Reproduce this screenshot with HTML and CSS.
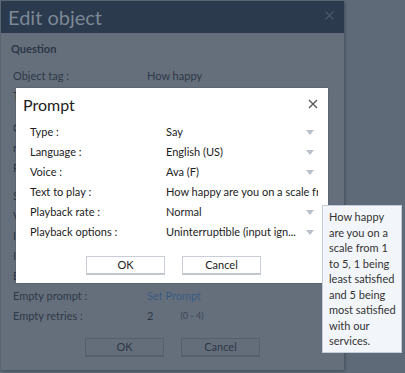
FILE: index.html
```html
<!DOCTYPE html>
<html>
<head>
<meta charset="utf-8">
<link rel="stylesheet" href="styles.css">
</head>
<body>
<div class="edit">
  <div class="edit-header">
    <span class="edit-title">Edit object</span>
    <svg class="edit-close" width="9" height="9" viewBox="0 0 9 9"><path d="M0.5 0.5L8.5 8.5M8.5 0.5L0.5 8.5" stroke="#4b5868" stroke-width="1.3"/></svg>
  </div>
  <div class="edit-body">
    <div class="section">Question</div>
    <div class="row"><span class="lbl">Object tag :</span><span class="val">How happy</span></div>
    <div class="row"><span class="lbl">Type :</span><span class="val"></span></div>
    <div class="row gap"><span class="lbl">Choices :</span><span class="val"></span></div>
    <div class="row"><span class="lbl">retries</span><span class="val"></span></div>
    <div class="row"><span class="lbl">Prompt :</span><span class="val"></span></div>
    <div class="row gap2"><span class="lbl">Settings</span><span class="val"></span></div>
    <div class="row"><span class="lbl">Voice :</span><span class="val"></span></div>
    <div class="row"><span class="lbl">Invalid :</span><span class="val"></span></div>
    <div class="row"><span class="lbl">Invalid retries :</span><span class="val"></span></div>
    <div class="row"><span class="lbl">Empty :</span><span class="val"></span></div>
    <div class="row"><span class="lbl">Empty prompt :</span><span class="val link">Set Prompt</span></div>
    <div class="row"><span class="lbl">Empty retries :</span><span class="val num">2</span><span class="range">(0 - 4)</span></div>
    <div class="edit-buttons">
      <span class="btn dim">OK</span>
      <span class="btn dim">Cancel</span>
    </div>
  </div>
</div>

<div class="prompt">
  <div class="prompt-header">
    <span class="prompt-title">Prompt</span>
    <svg class="prompt-close" width="10" height="10" viewBox="0 0 10 10"><path d="M1 1L9 9M9 1L1 9" stroke="#5a5a5a" stroke-width="1.4"/></svg>
  </div>
  <div class="prows">
    <div class="prow"><span class="plbl">Type :</span><span class="pval">Say</span><span class="arrow"></span></div>
    <div class="prow"><span class="plbl">Language :</span><span class="pval">English (US)</span><span class="arrow"></span></div>
    <div class="prow"><span class="plbl">Voice :</span><span class="pval">Ava (F)</span><span class="arrow"></span></div>
    <div class="prow"><span class="plbl">Text to play :</span><span class="pval clip">How happy are you on a scale from 1 to 5</span></div>
    <div class="prow"><span class="plbl">Playback rate :</span><span class="pval">Normal</span><span class="arrow"></span></div>
    <div class="prow"><span class="plbl">Playback options :</span><span class="pval">Uninterruptible (input ign...</span><span class="arrow"></span></div>
  </div>
  <div class="prompt-buttons">
    <span class="btn">OK</span>
    <span class="btn">Cancel</span>
  </div>
</div>

<div class="tooltip">How happy are you on a scale from 1 to 5, 1 being least satisfied and 5 being most satisfied with our services.</div>
</body>
</html>
```

FILE: styles.css
```css
html, body {
  margin: 0;
  padding: 0;
}
body {
  width: 405px;
  height: 373px;
  background: #5f6a78;
  font-family: Lato, "Noto Sans", sans-serif;
  font-size: 11px;
  position: relative;
  overflow: hidden;
}
.edit {
  margin: 1px 0 0 1px;
  width: 343px;
  height: 369px;
  background: #656f7c;
  box-shadow: 1px 1px 3px rgba(40, 48, 58, 0.5);
}
.edit-header {
  height: 32px;
  background: #2b3a4c;
  display: flex;
  align-items: center;
  justify-content: space-between;
  padding: 0 10px 0 7px;
}
.edit-title {
  font-size: 20px;
  color: #7c8895;
  line-height: 32px;
}
.edit-close {
  display: block;
  margin-top: -4px;
}
.edit-body {
  padding: 7px 0 0 12px;
  color: #2f3947;
}
.section {
  font-weight: bold;
  font-size: 11px;
  height: 18px;
  line-height: 18px;
  margin-left: -2px;
  color: #2c3645;
}
.row {
  display: flex;
  height: 20px;
  line-height: 20px;
  align-items: center;
}
.row:nth-child(2) { margin-top: 8px; }
.gap { margin-top: 12px; }
.gap2 { margin-top: 8px; }
.lbl {
  width: 134px;
  flex: none;
}
.val { color: #2f3947; }
.link { color: #3c5b81; }
.num { margin-left: 0; }
.range { margin-left: 27px; font-size: 9px; color: #3c4654; }
.edit-buttons {
  display: flex;
  gap: 17px;
  margin: 12px 0 0 72px;
}
.btn {
  width: 77px;
  height: 16px;
  line-height: 16px;
  text-align: center;
  border: 1px solid #c9ced6;
  border-bottom: 2px solid #c2c7ce;
  background: #ffffff;
  color: #222;
  font-size: 11px;
}
.btn.dim {
  border-color: #56606d;
  background: #646e7b;
  color: #2d3745;
}
.prompt {
  position: absolute;
  left: 16px;
  top: 88px;
  width: 312px;
  height: 195px;
  background: #fff;
  box-shadow: 0 0 2px rgba(0,0,0,0.25);
  color: #222;
}
.prompt-header {
  display: flex;
  justify-content: space-between;
  align-items: center;
  height: 32px;
  padding: 0 10px 0 7px;
}
.prompt-title {
  font-size: 16px;
  color: #1e1e1e;
}
.prows {
  padding: 2px 0 0 14px;
}
.prow {
  display: flex;
  align-items: center;
  height: 20px;
  line-height: 20px;
  position: relative;
}
.plbl {
  width: 136px;
  flex: none;
}
.pval {
  width: 134px;
  flex: none;
  white-space: nowrap;
  overflow: hidden;
}
.pval.clip { width: 152px; }
.arrow {
  margin-left: 6px;
  width: 0;
  height: 0;
  border-left: 4px solid transparent;
  border-right: 4px solid transparent;
  border-top: 5px solid #b8c0cc;
}
.prompt-buttons {
  display: flex;
  gap: 17px;
  margin: 14px 0 0 70px;
}
.tooltip {
  position: absolute;
  left: 322px;
  top: 205px;
  width: 67px;
  padding: 3px 5px 3px 6px;
  background: #f2f5f9;
  border: 1px solid #c5ccd6;
  color: #333;
  font-size: 11px;
  line-height: 15.5px;
}
```
